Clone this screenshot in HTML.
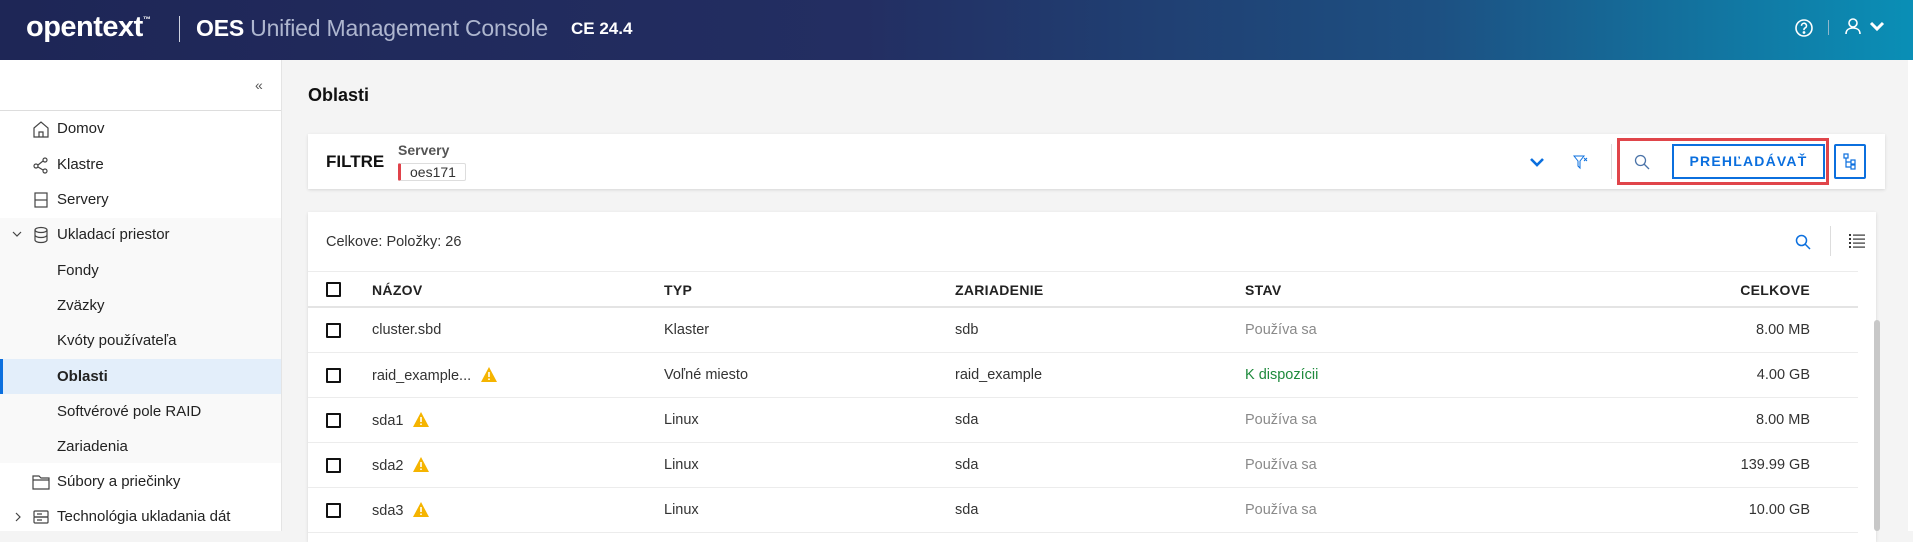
<!DOCTYPE html>
<html><head><meta charset="utf-8"><style>
*{box-sizing:border-box;margin:0;padding:0}
body{width:1913px;height:531px;overflow:hidden;background:#f4f4f4;font-family:"Liberation Sans",Arial,sans-serif;color:#222;position:relative}
.hdr{position:absolute;left:0;top:0;width:1913px;height:60px;background:linear-gradient(90deg,#1e2656 0%,#232e62 45%,#1d5082 75%,#0a8fb6 100%)}
.abs{position:absolute;white-space:nowrap}
.side{position:absolute;left:0;top:60px;width:282px;height:471px;background:#fff;border-right:1px solid #e4e4e4}
.si{position:absolute;left:0;width:281px;height:35px;font-size:15px;color:#222;line-height:35px}
.si span{position:absolute;left:57px}
.si svg{position:absolute;left:32px;top:9px}
.card{position:absolute;background:#fff;box-shadow:0 1px 3px rgba(0,0,0,.12)}
.th{font-weight:bold;font-size:14px;color:#222;letter-spacing:.3px}
.td{font-size:14.5px;color:#333}
.cb{position:absolute;left:18px;width:15px;height:15px;border:2px solid #111;border-radius:1px}
.row{position:absolute;left:0;width:1550px;height:45px;border-bottom:1px solid #ececec}
.row .abs{top:14px}
.warn{display:inline-block;vertical-align:-2px;margin-left:10px}
</style></head><body>
<div class="hdr">
 <div class="abs" style="left:26px;top:11px;color:#fff;font-size:29px;font-weight:bold;letter-spacing:-0.5px">opentext<sup style="font-size:8px;vertical-align:14px">™</sup></div>
 <div class="abs" style="left:179px;top:16px;width:1px;height:26px;background:#cfd3e0"></div>
 <div class="abs" style="left:196px;top:15px;font-size:23px;color:#fff;font-weight:bold;letter-spacing:-0.2px">OES <span style="color:#aeb6cf;font-weight:normal">Unified Management Console</span></div>
 <div class="abs" style="left:571px;top:19px;font-size:17px;color:#fff;font-weight:bold">CE 24.4</div>
 <svg class="abs" style="left:1794px;top:18px" width="20" height="20" viewBox="0 0 20 20" fill="none" stroke="#fff" stroke-width="1.6"><circle cx="10" cy="10" r="8"/><path d="M7.5 7.8a2.5 2.5 0 1 1 3.3 2.3c-.6.3-.8.7-.8 1.4v.6"/><circle cx="10" cy="14.5" r=".6" fill="#fff"/></svg>
 <div class="abs" style="left:1828px;top:20px;width:1px;height:15px;background:#8fb7cc"></div>
 <svg class="abs" style="left:1844px;top:17px" width="18" height="18" viewBox="0 0 18 18" fill="none" stroke="#fff" stroke-width="1.6"><circle cx="9" cy="6" r="4"/><path d="M2 17c0-4 3-6 7-6s7 2 7 6"/></svg>
 <svg class="abs" style="left:1869px;top:20px" width="16" height="12" viewBox="0 0 16 12" fill="none" stroke="#fff" stroke-width="3"><path d="M2 3l6 6 6-6"/></svg>
</div>
<div class="side">
 <div class="abs" style="left:255px;top:17px;font-size:14px;color:#555">«</div>
 <div class="abs" style="left:0;top:50px;width:281px;height:1px;background:#ddd"></div>
 <div class="abs" style="left:0;top:158px;width:281px;height:245px;background:#f9f9f9"></div>
 <div class="abs" style="left:0;top:299px;width:281px;height:35px;background:#e3eefa;border-left:3px solid #0b6fde"></div>
</div>
<div class="si" style="top:111px"><svg width="18" height="18" viewBox="0 0 18 18" fill="none" stroke="#444" stroke-width="1.2"><path d="M2 8l7-6 7 6v9H2z M7 17v-5h4v5"/></svg><span>Domov</span></div>
<div class="si" style="top:147px"><svg width="18" height="18" viewBox="0 0 18 18" fill="none" stroke="#444" stroke-width="1.2"><circle cx="4" cy="10" r="2"/><circle cx="13" cy="4" r="2"/><circle cx="13" cy="15" r="2"/><path d="M6 9l5-4M6 11l5 3"/></svg><span>Klastre</span></div>
<div class="si" style="top:182px"><svg width="18" height="18" viewBox="0 0 18 18" fill="none" stroke="#444" stroke-width="1.2"><rect x="3" y="2" width="12" height="14"/><path d="M3 9h12"/></svg><span>Servery</span></div>
<div class="si" style="top:217px"><svg style="left:12px;top:13px" width="10" height="8" viewBox="0 0 10 8" fill="none" stroke="#444" stroke-width="1.2"><path d="M1 2l4 4 4-4"/></svg><svg width="18" height="18" viewBox="0 0 18 18" fill="none" stroke="#444" stroke-width="1.2"><ellipse cx="9" cy="4" rx="6" ry="2.5"/><path d="M3 4v10c0 1.4 2.7 2.5 6 2.5s6-1.1 6-2.5V4M3 9c0 1.4 2.7 2.5 6 2.5s6-1.1 6-2.5"/></svg><span>Ukladací priestor</span></div>
<div class="si" style="top:253px"><span>Fondy</span></div>
<div class="si" style="top:288px"><span>Zväzky</span></div>
<div class="si" style="top:323px"><span>Kvóty používateľa</span></div>
<div class="si" style="top:359px;font-weight:bold"><span>Oblasti</span></div>
<div class="si" style="top:394px"><span>Softvérové pole RAID</span></div>
<div class="si" style="top:429px"><span>Zariadenia</span></div>
<div class="si" style="top:464px"><svg width="18" height="18" viewBox="0 0 18 18" fill="none" stroke="#444" stroke-width="1.2"><path d="M1 3h6l2 2h8v11H1z M1 7h16"/></svg><span>Súbory a priečinky</span></div>
<div class="si" style="top:499px"><svg style="left:14px;top:13px" width="8" height="10" viewBox="0 0 8 10" fill="none" stroke="#444" stroke-width="1.2"><path d="M2 1l4 4-4 4"/></svg><svg width="18" height="18" viewBox="0 0 18 18" fill="none" stroke="#444" stroke-width="1.2"><rect x="2" y="3" width="14" height="6" rx="1"/><rect x="2" y="9" width="14" height="6" rx="1"/><path d="M5 6h5M5 12h5"/></svg><span>Technológia ukladania dát</span></div>

<div class="abs" style="left:308px;top:85px;font-size:18px;font-weight:bold;color:#111">Oblasti</div>

<div class="card" style="left:308px;top:134px;width:1577px;height:55px">
 <div class="abs" style="left:18px;top:18px;font-size:17px;font-weight:bold;color:#111">FILTRE</div>
 <div class="abs" style="left:90px;top:8px;font-size:14px;font-weight:bold;color:#555">Servery</div>
 <div class="abs" style="left:90px;top:29px;height:18px;padding:0 9px 0 9px;border:1px solid #ddd;border-left:3px solid #e0424a;border-radius:2px;font-size:14px;line-height:16px;color:#333">oes171</div>
 <svg class="abs" style="left:1221px;top:23px" width="16" height="11" viewBox="0 0 16 11" fill="none" stroke="#0b6fde" stroke-width="2.6"><path d="M2 2l6 6 6-6"/></svg>
 <svg class="abs" style="left:1265px;top:20px" width="16" height="16" viewBox="0 0 16 16" fill="none" stroke="#0b6fde" stroke-width="1"><path d="M1 2h10l-4 5v7l-2-2V7z M11 4l3 3M14 4l-3 3"/></svg>
 <div class="abs" style="left:1303px;top:10px;width:1px;height:35px;background:#ddd"></div>
 <div class="abs" style="left:1309px;top:4px;width:212px;height:47px;border:3px solid #e0454a"></div>
 <svg class="abs" style="left:1326px;top:20px" width="16" height="16" viewBox="0 0 16 16" fill="none" stroke="#4a73a8" stroke-width="1.3"><circle cx="6.5" cy="6.5" r="5"/><path d="M10 10l5 5"/></svg>
 <div class="abs" style="left:1364px;top:10px;width:153px;height:35px;border:2px solid #0b6fde;color:#0b6fde;font-weight:bold;font-size:14px;letter-spacing:1.2px;text-align:center;line-height:31px">PREHĽADÁVAŤ</div>
 <div class="abs" style="left:1526px;top:10px;width:32px;height:35px;border:2px solid #0b6fde;border-radius:2px"></div>
 <svg class="abs" style="left:1535px;top:19px" width="14" height="17" viewBox="0 0 14 17" fill="none" stroke="#0b6fde" stroke-width="1.2"><rect x="1" y="1" width="4" height="4"/><rect x="8" y="7" width="4" height="4"/><rect x="8" y="12" width="4" height="4"/><path d="M3 5v9h5M3 9h5"/></svg>
</div>

<div class="card" style="left:308px;top:212px;width:1568px;height:330px">
 <div class="abs" style="left:18px;top:22px;font-size:14.5px;color:#333">Celkove: Položky: 26</div>
 <svg class="abs" style="left:1487px;top:22px" width="16" height="16" viewBox="0 0 16 16" fill="none" stroke="#0b6fde" stroke-width="1.5"><circle cx="6.5" cy="6.5" r="5"/><path d="M10 10l5 5"/></svg>
 <div class="abs" style="left:1522px;top:14px;width:1px;height:30px;background:#ddd"></div>
 <svg class="abs" style="left:1541px;top:21px" width="16" height="16" viewBox="0 0 16 16" fill="#333"><rect x="0" y="1" width="2" height="2"/><rect x="4" y="1.5" width="12" height="1.2"/><rect x="0" y="5" width="2" height="2"/><rect x="4" y="5.5" width="12" height="1.2"/><rect x="0" y="9" width="2" height="2"/><rect x="4" y="9.5" width="12" height="1.2"/><rect x="0" y="13" width="2" height="2"/><rect x="4" y="13.5" width="12" height="1.2"/></svg>
 <div class="abs" style="left:0;top:59px;width:1550px;height:1px;background:#ececec"></div>
 <div class="row" style="top:60px;height:36px;border-bottom:2px solid #e4e4e4">
  <div class="cb" style="top:10px;left:18px"></div>
  <div class="abs th" style="left:64px;top:10px">NÁZOV</div><div class="abs th" style="left:356px;top:10px">TYP</div><div class="abs th" style="left:647px;top:10px">ZARIADENIE</div><div class="abs th" style="left:937px;top:10px">STAV</div><div class="abs th" style="right:48px;top:10px">CELKOVE</div>
 </div>
 <div class="row" style="top:96px"><div class="cb" style="top:15px"></div><div class="abs td" style="left:64px">cluster.sbd</div><div class="abs td" style="left:356px">Klaster</div><div class="abs td" style="left:647px">sdb</div><div class="abs td" style="left:937px;color:#8a8a8a">Používa sa</div><div class="abs td" style="right:48px">8.00 MB</div></div>
 <div class="row" style="top:141px"><div class="cb" style="top:15px"></div><div class="abs td" style="left:64px">raid_example...<svg class="warn" width="16" height="15" viewBox="0 0 16 15"><path d="M8 0L16 15H0z" fill="#f5b400"/><path d="M8 5v5M8 11.5v1.5" stroke="#fff" stroke-width="1.6"/></svg></div><div class="abs td" style="left:356px">Voľné miesto</div><div class="abs td" style="left:647px">raid_example</div><div class="abs td" style="left:937px;color:#1e8a3c">K dispozícii</div><div class="abs td" style="right:48px">4.00 GB</div></div>
 <div class="row" style="top:186px"><div class="cb" style="top:15px"></div><div class="abs td" style="left:64px">sda1<svg class="warn" width="16" height="15" viewBox="0 0 16 15"><path d="M8 0L16 15H0z" fill="#f5b400"/><path d="M8 5v5M8 11.5v1.5" stroke="#fff" stroke-width="1.6"/></svg></div><div class="abs td" style="left:356px">Linux</div><div class="abs td" style="left:647px">sda</div><div class="abs td" style="left:937px;color:#8a8a8a">Používa sa</div><div class="abs td" style="right:48px">8.00 MB</div></div>
 <div class="row" style="top:231px"><div class="cb" style="top:15px"></div><div class="abs td" style="left:64px">sda2<svg class="warn" width="16" height="15" viewBox="0 0 16 15"><path d="M8 0L16 15H0z" fill="#f5b400"/><path d="M8 5v5M8 11.5v1.5" stroke="#fff" stroke-width="1.6"/></svg></div><div class="abs td" style="left:356px">Linux</div><div class="abs td" style="left:647px">sda</div><div class="abs td" style="left:937px;color:#8a8a8a">Používa sa</div><div class="abs td" style="right:48px">139.99 GB</div></div>
 <div class="row" style="top:276px"><div class="cb" style="top:15px"></div><div class="abs td" style="left:64px">sda3<svg class="warn" width="16" height="15" viewBox="0 0 16 15"><path d="M8 0L16 15H0z" fill="#f5b400"/><path d="M8 5v5M8 11.5v1.5" stroke="#fff" stroke-width="1.6"/></svg></div><div class="abs td" style="left:356px">Linux</div><div class="abs td" style="left:647px">sda</div><div class="abs td" style="left:937px;color:#8a8a8a">Používa sa</div><div class="abs td" style="right:48px">10.00 GB</div></div>
</div>
<div class="abs" style="left:1874px;top:320px;width:6px;height:211px;background:#c8c8c8;border-radius:3px"></div>
<div class="abs" style="left:1908px;top:60px;width:5px;height:471px;background:#fff"></div>
</body></html>
